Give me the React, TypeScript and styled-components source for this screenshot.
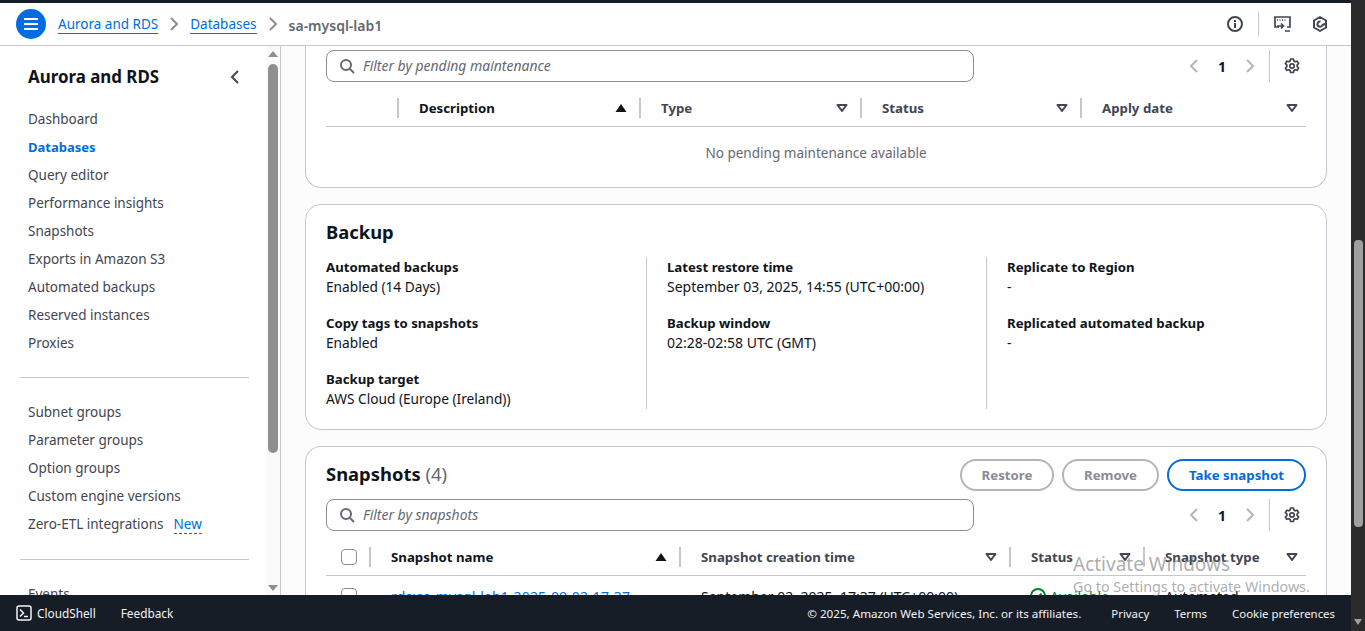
import React from 'react';
import styled, { createGlobalStyle } from 'styled-components';

const GlobalStyle = createGlobalStyle`
  * {
    box-sizing: border-box;
  }

  html,
  body {
    margin: 0;
    height: 100%;
    overflow: hidden;
    font-family: 'Noto Sans', 'Open Sans', Arial, sans-serif;
    font-size: 14px;
    color: #0f141a;
    background: #fff;
  }
`;

const Screen = styled.div`
  display: flex;
  width: 1365px;
  height: 631px;
  position: relative;
  overflow: hidden;
`;

const Page = styled.div`
  display: flex;
  flex-direction: column;
  width: 1351px;
  height: 100%;
`;

const WindowScrollbar = styled.div`
  position: relative;
  width: 14px;
  height: 100%;
  background: #2b2b2b;
`;

const WindowThumb = styled.div`
  position: absolute;
  left: 3px;
  top: 240px;
  width: 9px;
  height: 287px;
  border-radius: 4px;
  background: #9f9f9f;
`;

const WindowArrow = styled.div`
  position: absolute;
  left: 3px;
  bottom: 6px;
  width: 0;
  height: 0;
  border-left: 4.5px solid transparent;
  border-right: 4.5px solid transparent;
  border-top: 6px solid #9f9f9f;
`;

const TopStrip = styled.div`
  height: 3px;
  flex: none;
  background: #161d26;
`;

const Header = styled.header`
  display: flex;
  align-items: center;
  flex: none;
  height: 43px;
  padding: 0 23px 0 16px;
  border-bottom: 1px solid #c6c6cd;
  background: #fff;
`;

const MenuButton = styled.div`
  display: flex;
  align-items: center;
  justify-content: center;
  width: 30px;
  height: 30px;
  margin-right: 12px;
  border-radius: 50%;
  background: #006ce0;
`;

const Crumb = styled.a`
  margin-top: 2px;
  font-size: 13.5px;
  color: #006ce0;
  line-height: 17px;
  border-bottom: 1px solid #006ce0;
`;

const CrumbCurrent = styled.span`
  margin-top: 2px;
  color: #656871;
  font-weight: 600;
`;

const CrumbArrow = styled.span`
  display: flex;
  width: 32px;
  justify-content: center;
  color: #8c8c94;
`;

const HeaderTools = styled.div`
  display: flex;
  align-items: center;
  margin-left: auto;
  color: #424650;
`;

const ToolDivider = styled.span`
  width: 1px;
  height: 24px;
  margin: 0 15px;
  background: #c6c6cd;
`;

const HexWrap = styled.span`
  display: flex;
  margin-left: 21px;
`;

const Body = styled.div`
  display: flex;
  flex: 1;
  min-height: 0;
`;

const Sidebar = styled.aside`
  position: relative;
  flex: none;
  width: 281px;
  overflow: hidden;
  border-right: 1px solid #c6c6cd;
  background: #fff;
`;

const SideTitleRow = styled.div`
  display: flex;
  align-items: center;
  justify-content: space-between;
  width: 215px;
  margin: 18px 0 15px 28px;
  height: 26px;
`;

const SideTitle = styled.h2`
  margin: 0;
  font-size: 16.9px;
  line-height: 26px;
  font-weight: 700;
  color: #0f141a;
`;

const SideCollapse = styled.span`
  display: flex;
  color: #424650;
`;

const SideGroup = styled.nav`
  display: flex;
  flex-direction: column;
  padding-left: 28px;
`;

const SideItem = styled.a<{ $active?: boolean }>`
  display: flex;
  align-items: center;
  gap: 10px;
  height: 28px;
  font-size: ${(p) => (p.$active ? 13 : 13.5)}px;
  color: ${(p) => (p.$active ? '#006ce0' : '#424650')};
  font-weight: ${(p) => (p.$active ? 700 : 400)};
`;

const NewTag = styled.span`
  margin-top: 2px;
  color: #006ce0;
  line-height: 17px;
  border-bottom: 1px dashed #006ce0;
`;

const SideDivider = styled.div<{ $before: number }>`
  width: 229px;
  height: 1px;
  margin: ${(p) => p.$before}px 0 20px 20px;
  background: #c6c6cd;
`;

const SideTrack = styled.div`
  position: absolute;
  top: 0;
  right: 0;
  bottom: 0;
  width: 14px;
  background: #fafafa;
`;

const SideThumb = styled.div`
  position: absolute;
  left: 2px;
  top: 18px;
  width: 10px;
  height: 389px;
  border-radius: 5px;
  background: #8f8f8f;
`;

const SideArrow = styled.div<{ $up?: boolean }>`
  position: absolute;
  left: 2px;
  ${(p) => (p.$up ? 'top: 5px;' : 'bottom: 4px;')}
  width: 0;
  height: 0;
  border-left: 5px solid transparent;
  border-right: 5px solid transparent;
  ${(p) => (p.$up ? 'border-bottom: 6px solid #8f8f8f;' : 'border-top: 6px solid #8f8f8f;')}
`;

const Main = styled.main`
  display: flex;
  flex-direction: column;
  flex: 1;
  gap: 16px;
  min-width: 0;
  overflow: hidden;
  padding: 0 24px;
  background: #fcfcfc;
`;

const Card = styled.section<{ $cutTop?: boolean; $cutBottom?: boolean }>`
  flex: none;
  padding: 0 20px;
  border: 1px solid #c6c6cd;
  border-radius: 16px;
  background: #fff;
  ${(p) => p.$cutTop && 'border-top: 0; border-top-left-radius: 0; border-top-right-radius: 0;'}
  ${(p) => p.$cutBottom && 'border-bottom: 0;'}
`;

const FilterRow = styled.div<{ $top?: number }>`
  display: flex;
  align-items: center;
  height: 32px;
  margin-top: ${(p) => p.$top ?? 0}px;
`;

const FilterInput = styled.div`
  display: flex;
  align-items: center;
  gap: 8px;
  width: 648px;
  height: 32px;
  padding: 0 0 1px 12px;
  border: 1px solid #8c8c94;
  border-radius: 8px;
  font-style: italic;
  font-size: 13.95px;
  color: #656871;
`;

const Pager = styled.div`
  display: flex;
  align-items: center;
  height: 32px;
  margin-left: auto;
  margin-right: 6px;
  color: #b4b4bb;
`;

const PageNumber = styled.span`
  width: 40px;
  text-align: center;
  font-weight: 700;
  font-size: 14px;
  color: #0f141a;
`;

const PagerDivider = styled.span`
  width: 1px;
  height: 32px;
  margin: 0 14px 0 11px;
  background: #c6c6cd;
`;

const GearWrap = styled.span`
  display: flex;
  color: #424650;
`;

const TableHead = styled.div<{ $cols: string }>`
  display: grid;
  grid-template-columns: ${(p) => p.$cols};
  align-items: center;
  height: 45px;
  padding-top: 8px;
  border-bottom: 1px solid #c6c6cd;
`;

const HeadCell = styled.div<{ $sorted?: boolean }>`
  display: flex;
  align-items: center;
  justify-content: space-between;
  height: 20px;
  padding: 0 12px 0 20px;
  border-left: 2px solid #c6c6cd;
  font-size: 13.25px;
  font-weight: 700;
  color: ${(p) => (p.$sorted ? '#0f141a' : '#424650')};

  &:last-child {
    padding-right: 8px;
  }
`;

const BlankHead = styled.div`
  display: flex;
  align-items: center;
  padding-left: 15px;
`;

const EmptyText = styled.div`
  height: 60px;
  padding-top: 16px;
  text-align: center;
  font-size: 13.55px;
  line-height: 20px;
  color: #656871;
`;

const CardTitle = styled.h2`
  margin: 0;
  font-size: 18.4px;
  line-height: 26px;
  font-weight: 700;
  color: #0f141a;
`;

const Count = styled.span`
  font-weight: 400;
  color: #656871;
`;

const BackupTitle = styled(CardTitle)`
  padding-top: 14px;
  margin-bottom: 12px;
`;

const SnapshotsTitle = styled(CardTitle)`
  padding-bottom: 2px;
`;

const ColumnGrid = styled.div`
  display: grid;
  grid-template-columns: 320px 340px 1fr;
  height: 152px;
  margin-bottom: 20px;
`;

const Column = styled.div<{ $first?: boolean }>`
  display: flex;
  flex-direction: column;
  gap: 16px;
  padding-left: ${(p) => (p.$first ? 0 : 20)}px;
  ${(p) => !p.$first && 'border-left: 1px solid #c6c6cd;'}
`;

const Field = styled.div`
  display: flex;
  flex-direction: column;
  line-height: 20px;
  color: #0f141a;
`;

const FieldLabel = styled.span`
  font-size: 13.2px;
  font-weight: 700;
`;

const FieldValue = styled.span<{ $digits?: boolean }>`
  font-size: ${(p) => (p.$digits ? 14 : 13.7)}px;
`;

const SnapshotsTop = styled.div`
  display: flex;
  align-items: center;
  height: 32px;
  margin: 12px 0 8px;
`;

const ButtonRow = styled.div`
  display: flex;
  gap: 8px;
  margin-left: auto;
`;

const PillButton = styled.button<{ $w: number; $primary?: boolean }>`
  width: ${(p) => p.$w}px;
  height: 32px;
  padding: 0;
  border: 2px solid ${(p) => (p.$primary ? '#006ce0' : '#b4b4bb')};
  border-radius: 20px;
  background: #fff;
  font-family: inherit;
  font-size: 13.25px;
  font-weight: 700;
  color: ${(p) => (p.$primary ? '#006ce0' : '#8c8c94')};
`;

const Checkbox = styled.span`
  display: block;
  width: 16px;
  height: 16px;
  border: 1px solid #8c8c94;
  border-radius: 4px;
  background: #fff;
`;

const SnapshotRow = styled.div`
  display: grid;
  grid-template-columns: 43px 310px 330px 134px 1fr;
  align-items: center;
  height: 40px;
  font-size: 14px;
  color: #0f141a;
`;

const RowCell = styled.div`
  padding-left: 22px;
`;

const RowLink = styled(RowCell)`
  letter-spacing: 0.15px;
  color: #006ce0;
`;

const RowCheck = styled.div`
  padding-left: 15px;
`;

const StatusCell = styled.div`
  display: flex;
  align-items: center;
  gap: 4px;
  padding-left: 21px;
  color: #00802f;
`;

const Watermark = styled.div`
  position: absolute;
  left: 1073px;
  top: 552px;
  color: rgba(120, 120, 120, 0.62);
  pointer-events: none;
`;

const WatermarkTitle = styled.div`
  font-size: 19px;
  line-height: 24px;
`;

const WatermarkLine = styled.div`
  font-size: 14.3px;
  line-height: 22px;
`;

const Footer = styled.footer`
  position: relative;
  display: flex;
  align-items: center;
  flex: none;
  height: 36px;
  padding: 0 16px;
  font-size: 11.8px;
  color: #f3f3f7;
  background: #161d26;
`;

const ShellLink = styled.span`
  display: flex;
  align-items: center;
  gap: 5px;
  margin-right: 25px;
`;

const FooterRight = styled.div`
  display: flex;
  align-items: center;
  margin-left: auto;
  font-size: 11.65px;
`;

const FooterLink = styled.span<{ $left: number }>`
  margin-left: ${(p) => p.$left}px;
  font-size: 11.4px;
`;

const MenuIcon = () => (
  <svg width="16" height="16" viewBox="0 0 16 16" fill="none" stroke="#fff" strokeWidth="2">
    <path d="M1 3h14M1 8h14M1 13h14" />
  </svg>
);

const ChevronRight = ({ size = 16 }: { size?: number }) => (
  <svg width={size} height={size} viewBox="0 0 16 16" fill="none" stroke="currentColor" strokeWidth="2">
    <path d="M5 2l6 6-6 6" />
  </svg>
);

const ChevronLeft = ({ size = 16 }: { size?: number }) => (
  <svg width={size} height={size} viewBox="0 0 16 16" fill="none" stroke="currentColor" strokeWidth="2">
    <path d="M11 2L5 8l6 6" />
  </svg>
);

const SearchIcon = () => (
  <svg width="16" height="16" viewBox="0 0 16 16" fill="none" stroke="#656871" strokeWidth="2">
    <circle cx="7" cy="7" r="5" />
    <path d="M10.6 10.6L15 15" />
  </svg>
);

const GearIcon = () => (
  <svg width="16" height="16" viewBox="0 0 16 16" fill="none" stroke="currentColor" strokeWidth="1.7" strokeLinejoin="round">
    <path d="M6.6 1h2.8l.5 2 1.3.8 2-.6 1.4 2.4-1.5 1.4v1.5l1.5 1.4-1.4 2.4-2-.6-1.3.8-.5 2H6.6l-.5-2-1.3-.8-2 .6L1.4 10l1.5-1.4V7.100L1.400 5.600l1.400-2.400 2 .6 1.300-.8z" />
    <circle cx="8" cy="8" r="2.200" />
  </svg>
);

const SortUp = () => (
  <svg width="12" height="8" viewBox="0 0 12 8" fill="#0f141a">
    <path d="M6 0l5.500 8H.5z" />
  </svg>
);

const SortDown = () => (
  <svg width="12" height="8" viewBox="0 0 12 8" fill="none" stroke="#424650" strokeWidth="2" strokeLinejoin="round">
    <path d="M1.500 1h9L6 7z" />
  </svg>
);

const InfoIcon = () => (
  <svg width="16" height="16" viewBox="0 0 16 16" fill="none" stroke="currentColor" strokeWidth="2">
    <circle cx="8" cy="8" r="7" />
    <path d="M8 7v5M8 4v2" />
  </svg>
);

const ConsoleIcon = () => (
  <svg width="17" height="16" viewBox="0 0 17 16" fill="none" stroke="currentColor" strokeWidth="1.700">
    <path d="M5 11H1V1h15v10h-3" />
    <path d="M3 4h1M5.500 4h1M8 4h1M10.500 4h1" strokeWidth="1.500" />
    <path d="M3 10h6M7 7.500l2.500 2.500L7 12.500M11 15h5" />
  </svg>
);

const HexIcon = () => (
  <svg width="16" height="16" viewBox="0 0 16 16" fill="none" stroke="currentColor" strokeWidth="2" strokeLinejoin="round">
    <path d="M8 1l6 3.500v7L8 15l-6-3.500v-7z" />
    <path d="M8.500 5.500a2.600 2.600 0 1 0 2 3.500L14 7.500" />
  </svg>
);

const ShellIcon = () => (
  <svg width="16" height="16" viewBox="0 0 16 16" fill="none" stroke="#f3f3f7" strokeWidth="1.500">
    <rect x="1" y="1" width="14" height="14" rx="2" />
    <path d="M4 4.500L7.500 8 4 11.500M8 11.500h4" />
  </svg>
);

const StatusIcon = () => (
  <svg width="16" height="16" viewBox="0 0 16 16" fill="none" stroke="#00802f" strokeWidth="2">
    <circle cx="8" cy="8" r="7" />
    <path d="M4.500 8l2.500 2.500 4.500-5" />
  </svg>
);

const PagerBlock = () => (
  <Pager>
    <ChevronLeft />
    <PageNumber>1</PageNumber>
    <ChevronRight />
    <PagerDivider />
    <GearWrap>
      <GearIcon />
    </GearWrap>
  </Pager>
);

const topNav = [
  'Dashboard',
  'Databases',
  'Query editor',
  'Performance insights',
  'Snapshots',
  'Exports in Amazon S3',
  'Automated backups',
  'Reserved instances',
  'Proxies',
];

const midNav = ['Subnet groups', 'Parameter groups', 'Option groups', 'Custom engine versions'];

const backupColumns = [
  [
    ['Automated backups', 'Enabled (14 Days)'],
    ['Copy tags to snapshots', 'Enabled'],
    ['Backup target', 'AWS Cloud (Europe (Ireland))'],
  ],
  [
    ['Latest restore time', 'September 03, 2025, 14:55 (UTC+00:00)'],
    ['Backup window', '02:28-02:58 UTC (GMT)'],
  ],
  [
    ['Replicate to Region', '-'],
    ['Replicated automated backup', '-'],
  ],
];

export default function App() {
  return (
    <Screen>
      <GlobalStyle />
      <Page>
        <TopStrip />
        <Header>
          <MenuButton>
            <MenuIcon />
          </MenuButton>
          <Crumb>Aurora and RDS</Crumb>
          <CrumbArrow>
            <ChevronRight />
          </CrumbArrow>
          <Crumb>Databases</Crumb>
          <CrumbArrow>
            <ChevronRight />
          </CrumbArrow>
          <CrumbCurrent>sa-mysql-lab1</CrumbCurrent>
          <HeaderTools>
            <InfoIcon />
            <ToolDivider />
            <ConsoleIcon />
            <HexWrap>
              <HexIcon />
            </HexWrap>
          </HeaderTools>
        </Header>
        <Body>
          <Sidebar>
            <SideTitleRow>
              <SideTitle>Aurora and RDS</SideTitle>
              <SideCollapse>
                <ChevronLeft />
              </SideCollapse>
            </SideTitleRow>
            <SideGroup>
              {topNav.map((item) => (
                <SideItem key={item} $active={item === 'Databases'}>
                  {item}
                </SideItem>
              ))}
            </SideGroup>
            <SideDivider $before={20} />
            <SideGroup>
              {midNav.map((item) => (
                <SideItem key={item}>{item}</SideItem>
              ))}
              <SideItem>
                Zero-ETL integrations <NewTag>New</NewTag>
              </SideItem>
            </SideGroup>
            <SideDivider $before={21} />
            <SideGroup>
              <SideItem>Events</SideItem>
            </SideGroup>
            <SideTrack>
              <SideArrow $up />
              <SideThumb />
              <SideArrow />
            </SideTrack>
          </Sidebar>
          <Main>
            <Card $cutTop>
              <FilterRow $top={4}>
                <FilterInput>
                  <SearchIcon />
                  Filter by pending maintenance
                </FilterInput>
                <PagerBlock />
              </FilterRow>
              <TableHead $cols="71px 242px 221px 220px 1fr">
                <div />
                <HeadCell $sorted>
                  Description
                  <SortUp />
                </HeadCell>
                <HeadCell>
                  Type
                  <SortDown />
                </HeadCell>
                <HeadCell>
                  Status
                  <SortDown />
                </HeadCell>
                <HeadCell>
                  Apply date
                  <SortDown />
                </HeadCell>
              </TableHead>
              <EmptyText>No pending maintenance available</EmptyText>
            </Card>
            <Card>
              <BackupTitle>Backup</BackupTitle>
              <ColumnGrid>
                {backupColumns.map((col, i) => (
                  <Column key={i} $first={i === 0}>
                    {col.map(([label, value]) => (
                      <Field key={label}>
                        <FieldLabel>{label}</FieldLabel>
                        <FieldValue $digits={i === 1}>{value}</FieldValue>
                      </Field>
                    ))}
                  </Column>
                ))}
              </ColumnGrid>
            </Card>
            <Card $cutBottom>
              <SnapshotsTop>
                <SnapshotsTitle>
                  Snapshots <Count>(4)</Count>
                </SnapshotsTitle>
                <ButtonRow>
                  <PillButton $w={94}>Restore</PillButton>
                  <PillButton $w={97}>Remove</PillButton>
                  <PillButton $w={139} $primary>
                    Take snapshot
                  </PillButton>
                </ButtonRow>
              </SnapshotsTop>
              <FilterRow>
                <FilterInput>
                  <SearchIcon />
                  Filter by snapshots
                </FilterInput>
                <PagerBlock />
              </FilterRow>
              <TableHead $cols="43px 310px 330px 134px 1fr">
                <BlankHead>
                  <Checkbox />
                </BlankHead>
                <HeadCell $sorted>
                  Snapshot name
                  <SortUp />
                </HeadCell>
                <HeadCell>
                  Snapshot creation time
                  <SortDown />
                </HeadCell>
                <HeadCell>
                  Status
                  <SortDown />
                </HeadCell>
                <HeadCell>
                  Snapshot type
                  <SortDown />
                </HeadCell>
              </TableHead>
              <SnapshotRow>
                <RowCheck>
                  <Checkbox />
                </RowCheck>
                <RowLink>rds:sa-mysql-lab1-2025-09-02-17-37</RowLink>
                <RowCell>September 02, 2025, 17:37 (UTC+00:00)</RowCell>
                <StatusCell>
                  <StatusIcon />
                  Available
                </StatusCell>
                <RowCell>Automated</RowCell>
              </SnapshotRow>
            </Card>
          </Main>
        </Body>
        <Footer>
          <ShellLink>
            <ShellIcon />
            CloudShell
          </ShellLink>
          Feedback
          <FooterRight>
            © 2025, Amazon Web Services, Inc. or its affiliates.
            <FooterLink $left={30}>Privacy</FooterLink>
            <FooterLink $left={25}>Terms</FooterLink>
            <FooterLink $left={25}>Cookie preferences</FooterLink>
          </FooterRight>
        </Footer>
      </Page>
      <WindowScrollbar>
        <WindowThumb />
        <WindowArrow />
      </WindowScrollbar>
      <Watermark>
        <WatermarkTitle>Activate Windows</WatermarkTitle>
        <WatermarkLine>Go to Settings to activate Windows.</WatermarkLine>
      </Watermark>
    </Screen>
  );
}
